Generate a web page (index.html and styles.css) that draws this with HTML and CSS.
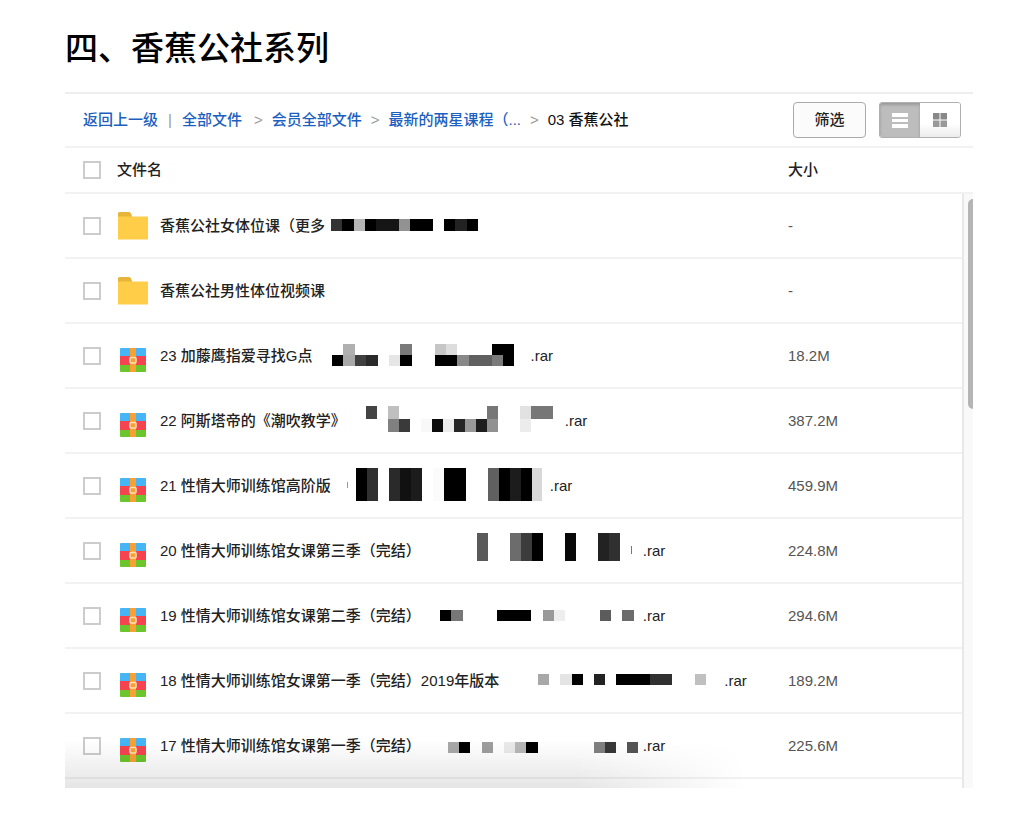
FILE: index.html
```html
<!DOCTYPE html>
<html lang="zh-CN">
<head>
    <meta charset="UTF-8">
    <meta name="viewport" content="width=device-width, initial-scale=1.0">
    <title>香蕉公社系列</title>
    <link rel="stylesheet" href="styles.css">
</head>
<body>
    <!-- shared icons -->
    <svg class="symbols" width="0" height="0" aria-hidden="true">
        <symbol id="folder" viewBox="0 0 32 32">
            <path d="M1 8V3.500Q1 2 2.500 2H12Q13.500 2 14 3.500L15 6V8z" fill="#e6b539"/>
            <path d="M1 6.500H31V29.500H1z" fill="#ffcd48"/>
        </symbol>
        <symbol id="rar" viewBox="0 0 32 32">
            <path d="M4 8H28Q29 8 29 9V16H3V9Q3 8 4 8z" fill="#45b5f5"/>
            <path d="M3 16H29V25H3z" fill="#f5444f"/>
            <path d="M3 25H29V31Q29 32 28 32H4Q3 32 3 31z" fill="#6cc52c"/>
            <path d="M13 8H19V32H13z" fill="#f9a035"/>
            <rect x="13" y="17.500" width="6" height="5.500" rx="1" fill="#f9a035" stroke="#ffe3b5" stroke-width="1.500"/>
        </symbol>
    </svg>

    <main class="page">
        <h1 class="title">四、香蕉公社系列</h1>
        <section class="panel">
            <div class="toolbar">
                <nav class="crumbs">
                    <a href="#">返回上一级</a>
                    <span class="bar">|</span>
                    <a href="#">全部文件</a>
                    <span class="arrow first">&gt;</span>
                    <a href="#">会员全部文件</a>
                    <span class="arrow">&gt;</span>
                    <a href="#">最新的两星课程（...</a>
                    <span class="arrow">&gt;</span>
                    <span class="current">03 香蕉公社</span>
                </nav>
                <button class="filter">筛选</button>
                <div class="views">
                    <button class="view active" aria-label="列表">
                        <svg width="16" height="18" viewBox="0 0 16 18"><path d="M0 2H16V6H0zM0 8H16V11H0zM0 13H16V17H0z" fill="#fff"/></svg>
                    </button>
                    <button class="view" aria-label="网格">
                        <svg width="16" height="16" viewBox="0 0 16 16"><path d="M1 1H7.500V7.500H1zM8.500 1H15V7.500H8.500z" fill="#888"/><path d="M1 8.500H7.500V15H1zM8.500 8.500H15V15H8.500z" fill="#999"/></svg>
                    </button>
                </div>
            </div>
            <div class="list">
                <table class="files">
                    <thead>
                        <tr>
                            <th class="check"><input type="checkbox" aria-label="全选"></th>
                            <th>文件名</th>
                            <th class="size">大小</th>
                        </tr>
                    </thead>
                    <tbody>
                        <tr>
                            <td class="check"><input type="checkbox" id="f1"></td>
                            <td><div class="name">
                                <svg class="icon"><use href="#folder"/></svg>
                                <label for="f1">香蕉公社女体位课（更多</label>
                                <svg class="mosaic" width="160" height="40"><g transform="translate(6 13) scale(11.3 12)">
                                    <path fill="#333" d="M0 0h1v1h-1z"/><path fill="#000" d="M1 0h1v1h-1zM3 0h1v1h-1zM7 0h2v1h-2zM10 0h1v1h-1zM12 0h1v1h-1z"/><path fill="#b5b5b5" d="M2 0h1v1h-1z"/><path fill="#151515" d="M4 0h2v1h-2z"/><path fill="#929292" d="M6 0h1v1h-1z"/><path fill="#222" d="M11 0h1v1h-1z"/>
                                </g></svg>
                            </div></td>
                            <td class="size">-</td>
                        </tr>
                        <tr>
                            <td class="check"><input type="checkbox" id="f2"></td>
                            <td><div class="name">
                                <svg class="icon"><use href="#folder"/></svg>
                                <label for="f2">香蕉公社男性体位视频课</label>
                            </div></td>
                            <td class="size">-</td>
                        </tr>
                        <tr>
                            <td class="check"><input type="checkbox" id="f3"></td>
                            <td><div class="name">
                                <svg class="icon"><use href="#rar"/></svg>
                                <label for="f3">23 加藤鹰指爱寻找G点</label>
                                <svg class="mosaic" width="218" height="40"><g transform="translate(19 8) scale(11.4 11)">
                                    <path fill="#b0b0b0" d="M1 0h1v1h-1z"/><path fill="#7a7a7a" d="M6 0h1v1h-1zM14 1h1v1h-1z"/><path fill="#c6c6c6" d="M9 0h1v1h-1z"/><path fill="#ddd" d="M10 0h1v1h-1z"/><path fill="#000" d="M14 0h2v1h-2zM0 1h1v1h-1zM6 1h1v1h-1zM9 1h2v1h-2zM15 1h1v1h-1z"/><path fill="#a8a8a8" d="M1 1h1v1h-1z"/><path fill="#404040" d="M2 1h1v1h-1z"/><path fill="#2a2a2a" d="M3 1h1v1h-1z"/><path fill="#e6e6e6" d="M5 1h1v1h-1z"/><path fill="#888" d="M11 1h1v1h-1z"/><path fill="#606060" d="M12 1h2v1h-2z"/>
                                </g></svg>
                                <span>.rar</span>
                            </div></td>
                            <td class="size">18.2M</td>
                        </tr>
                        <tr>
                            <td class="check"><input type="checkbox" id="f4"></td>
                            <td><div class="name">
                                <svg class="icon"><use href="#rar"/></svg>
                                <label for="f4">22 阿斯塔帝的《潮吹教学》</label>
                                <svg class="mosaic" width="219" height="40"><g transform="translate(20 5) scale(11 13)">
                                    <path fill="#444" d="M0 0h1v1h-1z"/><path fill="#bfbfbf" d="M2 0h1v1h-1z"/><path fill="#777" d="M11 0h1v1h-1zM15 0h2v1h-2z"/><path fill="#e2e2e2" d="M14 0h1v1h-1z"/><path fill="#808080" d="M2 1h1v1h-1z"/><path fill="#3a3a3a" d="M3 1h1v1h-1z"/><path fill="#f8f8f8" d="M5 1h1v1h-1z"/><path fill="#0c0c0c" d="M6 1h1v1h-1z"/><path fill="#ececec" d="M7 1h1v1h-1zM14 1h1v1h-1z"/><path fill="#262626" d="M8 1h1v1h-1z"/><path fill="#999" d="M9 1h1v1h-1z"/><path fill="#1e1e1e" d="M10 1h1v1h-1z"/><path fill="#919191" d="M11 1h1v1h-1z"/>
                                </g></svg>
                                <span>.rar</span>
                            </div></td>
                            <td class="size">387.2M</td>
                        </tr>
                        <tr>
                            <td class="check"><input type="checkbox" id="f5"></td>
                            <td><div class="name">
                                <svg class="icon"><use href="#rar"/></svg>
                                <label for="f5">21 性情大师训练馆高阶版</label>
                                <svg class="mosaic" width="219" height="40"><path d="M16 16h1v6h-1z" fill="#999"/><g transform="translate(25 2) scale(11 33)">
                                    <path fill="#000" d="M0 0h1v1h-1zM8 0h2v1h-2zM13 0h1v1h-1zM15 0h1v1h-1z"/><path fill="#303030" d="M1 0h1v1h-1z"/><path fill="#2a2a2a" d="M3 0h1v1h-1z"/><path fill="#111" d="M4 0h1v1h-1z"/><path fill="#1c1c1c" d="M5 0h1v1h-1zM14 0h1v1h-1z"/><path fill="#fbfbfb" d="M7 0h1v1h-1z"/><path fill="#606060" d="M12 0h1v1h-1z"/><path fill="#d8d8d8" d="M16 0h.9v1h-.9z"/>
                                </g></svg>
                                <span>.rar</span>
                            </div></td>
                            <td class="size">459.9M</td>
                        </tr>
                        <tr>
                            <td class="check"><input type="checkbox" id="f6"></td>
                            <td><div class="name">
                                <svg class="icon"><use href="#rar"/></svg>
                                <label for="f6">20 性情大师训练馆女课第三季（完结）</label>
                                <svg class="mosaic" width="222" height="40"><path d="M210 15h1v8h-1z" fill="#777"/><g transform="translate(56 2) scale(11 28)">
                                    <path fill="#5a5a5a" d="M0 0h1v1h-1z"/><path fill="#6c6c6c" d="M3 0h1v1h-1z"/><path fill="#3c3c3c" d="M4 0h1v1h-1z"/><path fill="#000" d="M5 0h1v1h-1z"/><path fill="#080808" d="M8 0h1v1h-1z"/><path fill="#222" d="M11 0h1v1h-1z"/><path fill="#303030" d="M12 0h1v1h-1z"/>
                                </g></svg>
                                <span>.rar</span>
                            </div></td>
                            <td class="size">224.8M</td>
                        </tr>
                        <tr>
                            <td class="check"><input type="checkbox" id="f7"></td>
                            <td><div class="name">
                                <svg class="icon"><use href="#rar"/></svg>
                                <label for="f7">19 性情大师训练馆女课第二季（完结）</label>
                                <svg class="mosaic" width="222" height="40"><g transform="translate(19 14) scale(11.4 11)">
                                    <path fill="#000" d="M0 0h1v1h-1zM5 0h3v1h-3z"/><path fill="#777" d="M1 0h1v1h-1z"/><path fill="#999" d="M9 0h1v1h-1z"/><path fill="#eee" d="M10 0h1v1h-1z"/><path fill="#5c5c5c" d="M14 0h1v1h-1z"/><path fill="#6c6c6c" d="M16 0h1v1h-1z"/>
                                </g></svg>
                                <span>.rar</span>
                            </div></td>
                            <td class="size">294.6M</td>
                        </tr>
                        <tr>
                            <td class="check"><input type="checkbox" id="f8"></td>
                            <td><div class="name">
                                <svg class="icon"><use href="#rar"/></svg>
                                <label for="f8">18 性情大师训练馆女课第一季（完结）2019年版本</label>
                                <svg class="mosaic" width="225" height="40"><g transform="translate(39 13) scale(11.2 11)">
                                    <path fill="#a8a8a8" d="M0 0h1v1h-1z"/><path fill="#e4e4e4" d="M2 0h1v1h-1z"/><path fill="#000" d="M3 0h1v1h-1zM7 0h3v1h-3z"/><path fill="#222" d="M5 0h1v1h-1z"/><path fill="#303030" d="M10 0h2v1h-2z"/><path fill="#c0c0c0" d="M14 0h1v1h-1z"/>
                                </g></svg>
                                <span>.rar</span>
                            </div></td>
                            <td class="size">189.2M</td>
                        </tr>
                        <tr>
                            <td class="check"><input type="checkbox" id="f9"></td>
                            <td><div class="name">
                                <svg class="icon"><use href="#rar"/></svg>
                                <label for="f9">17 性情大师训练馆女课第一季（完结）</label>
                                <svg class="mosaic" width="222" height="40"><g transform="translate(27 16) scale(11.2 11)">
                                    <path fill="#a8a8a8" d="M0 0h1v1h-1z"/><path fill="#000" d="M1 0h1v1h-1zM7 0h1v1h-1z"/><path fill="#9e9e9e" d="M3 0h1v1h-1z"/><path fill="#eaeaea" d="M5 0h1v1h-1z"/><path fill="#b8b8b8" d="M6 0h1v1h-1z"/><path fill="#808080" d="M13 0h1v1h-1z"/><path fill="#383838" d="M14 0h1v1h-1z"/><path fill="#555" d="M16 0h1v1h-1z"/>
                                </g></svg>
                                <span>.rar</span>
                            </div></td>
                            <td class="size">225.6M</td>
                        </tr>
                    </tbody>
                </table>
                <div class="shade"></div>
                <div class="scrollbar"><div class="thumb"></div></div>
            </div>
        </section>
    </main>
</body>
</html>
```
FILE: styles.css
```css
* {
    box-sizing: border-box;
}
body {
    margin: 0;
    background: #fff;
    color: #222;
    font: 500 15px/20px "Liberation Sans", "Noto Sans CJK SC", sans-serif;
}
.symbols {
    position: absolute;
}
.page {
    padding: 25px 51px 44px 65px;
}
.title {
    margin: 0 0 19px;
    color: #000;
    font-size: 33px;
    font-weight: 500;
    line-height: 48px;
}
.panel {
    border-top: 2px solid #eee;
}
.toolbar {
    display: flex;
    align-items: center;
    height: 54px;
    padding: 0 12px 0 18px;
    border-bottom: 2px solid #f2f2f2;
}
.crumbs {
    display: flex;
    flex: 1;
    white-space: nowrap;
}
.crumbs a {
    color: #1c5fc0;
    text-decoration: none;
}
.bar {
    margin: 0 10px;
    color: #999;
}
.arrow {
    margin: 0 9px;
    color: #999;
}
.arrow.first {
    margin-left: 12px;
}
.current {
    color: #111;
}
.filter {
    width: 73px;
    height: 36px;
    margin-right: 13px;
    padding: 0;
    border: 1px solid #aaa;
    border-radius: 4px;
    background: #fbfbfb;
    color: #222;
    font: inherit;
}
.views {
    display: flex;
    height: 36px;
    border: 1px solid #b0b0b0;
    border-radius: 3px;
    overflow: hidden;
}
.view {
    display: flex;
    align-items: center;
    justify-content: center;
    width: 40px;
    padding: 0;
    border: 0;
    background: linear-gradient(#fff 60%, #ececec);
}
.view.active {
    background: #bdbdbd;
    box-shadow: inset 0 2px 3px #999;
}

/* file list */
.list {
    position: relative;
    padding-bottom: 9px;
}
.files {
    width: 100%;
    border-collapse: separate;
    border-spacing: 0;
}
.files th,
.files td {
    height: 65px;
    padding: 0;
    border-bottom: 2px solid #f2f2f2;
    text-align: left;
    font-weight: 500;
}
.files th {
    height: 46px;
}
.files .check {
    width: 52px;
    padding-left: 18px;
}
.files .size {
    width: 185px;
}
td.size {
    color: #555;
}
.check input {
    display: block;
    width: 18px;
    height: 18px;
    margin: 0;
    appearance: none;
    border: 2px solid #ccc;
    background: #fff;
}
.name {
    display: flex;
    align-items: center;
    white-space: nowrap;
}
.icon {
    flex: none;
    width: 32px;
    height: 32px;
    margin-right: 11px;
}
.mosaic {
    flex: none;
    shape-rendering: crispEdges;
}
.shade {
    position: absolute;
    left: 0;
    bottom: 0;
    width: 75%;
    height: 48px;
    background: linear-gradient(transparent, rgba(0, 0, 0, 0.1));
    -webkit-mask-image: linear-gradient(to right, #000 75%, transparent);
    mask-image: linear-gradient(to right, #000 75%, transparent);
    pointer-events: none;
}
.scrollbar {
    position: absolute;
    top: 46px;
    right: 0;
    bottom: 0;
    width: 11px;
    padding: 5px 0 0 4px;
    border-left: 2px solid #e8e8e8;
    background: #f9f9f9;
}
.thumb {
    height: 210px;
    border-radius: 5px 0 0 5px;
    background: #b5b5b5;
}
```
